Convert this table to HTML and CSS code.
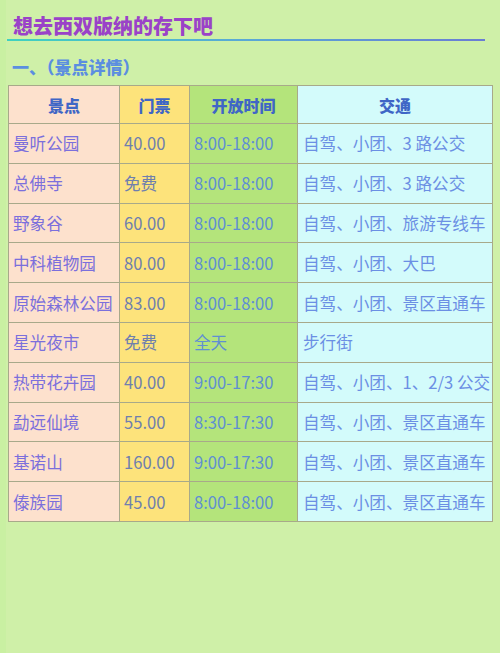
FILE: index.html
```html
<!DOCTYPE html>
<html lang="zh-CN">
<head>
<meta charset="utf-8">
<title>想去西双版纳的存下吧</title>
<link rel="stylesheet" href="styles.css">
</head>
<body>
<div class="page">
  <h1 class="title">想去西双版纳的存下吧</h1>
  <h2 class="subtitle">一、（景点详情）</h2>
  <table class="spots">
    <thead>
      <tr>
        <th class="c1">景点</th>
        <th class="c2">门票</th>
        <th class="c3">开放时间</th>
        <th class="c4">交通</th>
      </tr>
    </thead>
    <tbody>
      <tr><td class="c1">曼听公园</td><td class="c2">40.00</td><td class="c3">8:00-18:00</td><td class="c4">自驾、小团、3 路公交</td></tr>
      <tr><td class="c1">总佛寺</td><td class="c2">免费</td><td class="c3">8:00-18:00</td><td class="c4">自驾、小团、3 路公交</td></tr>
      <tr><td class="c1">野象谷</td><td class="c2">60.00</td><td class="c3">8:00-18:00</td><td class="c4">自驾、小团、旅游专线车</td></tr>
      <tr><td class="c1">中科植物园</td><td class="c2">80.00</td><td class="c3">8:00-18:00</td><td class="c4">自驾、小团、大巴</td></tr>
      <tr><td class="c1">原始森林公园</td><td class="c2">83.00</td><td class="c3">8:00-18:00</td><td class="c4">自驾、小团、景区直通车</td></tr>
      <tr><td class="c1">星光夜市</td><td class="c2">免费</td><td class="c3">全天</td><td class="c4">步行街</td></tr>
      <tr><td class="c1">热带花卉园</td><td class="c2">40.00</td><td class="c3">9:00-17:30</td><td class="c4">自驾、小团、1、2/3 公交</td></tr>
      <tr><td class="c1">勐远仙境</td><td class="c2">55.00</td><td class="c3">8:30-17:30</td><td class="c4">自驾、小团、景区直通车</td></tr>
      <tr><td class="c1">基诺山</td><td class="c2">160.00</td><td class="c3">9:00-17:30</td><td class="c4">自驾、小团、景区直通车</td></tr>
      <tr><td class="c1">傣族园</td><td class="c2">45.00</td><td class="c3">8:00-18:00</td><td class="c4">自驾、小团、景区直通车</td></tr>
    </tbody>
  </table>
</div>
</body>
</html>
```
FILE: styles.css
```css
html, body {
  margin: 0;
  padding: 0;
}
body {
  background: #cff0a8;
  font-family: "Noto Sans CJK SC", "Noto Sans", sans-serif;
}
.page {
  min-height: 653px;
  box-sizing: border-box;
  padding-top: 13px;
  border-left: 6px solid #c9f0a2;
}
.title {
  margin: 0 0 0 1px;
  width: 478px;
  padding: 0 0 2px 6px;
  box-sizing: border-box;
  font-size: 20px;
  line-height: 26px;
  font-weight: 900;
  color: #9a42c8;
  background: linear-gradient(90deg, #3fd2bf, #5aa8d6 50%, #6a7cd4) left bottom / 100% 2px no-repeat;
}
.subtitle {
  margin: 14px 0 0 6px;
  font-size: 17px;
  line-height: 24px;
  font-weight: 900;
  color: #5b8ee0;
}
.spots {
  margin: 6px 0 0 2px;
  width: 485px;
  border-collapse: collapse;
  table-layout: fixed;
  font-size: 16.6px;
}
.spots th, .spots td {
  box-sizing: border-box;
  border: 1px solid #a8a98a;
  padding: 0 0 0 4px;
  white-space: nowrap;
  overflow: hidden;
  text-align: left;
  font-weight: 400;
}
.spots th {
  height: 38px;
  padding: 0;
  text-align: center;
  font-size: 16px;
  font-weight: 900;
  color: #3f66c6;
}
.spots td {
  height: 39.8px;
  line-height: 24px;
}
.spots .c1 { width: 111px; background: #fde1cd; }
.spots .c2 { width: 70px; background: #fde37b; }
.spots .c3 { width: 108px; background: #b4e47b; }
.spots .c4 { background: #d3fbfb; }
.spots td.c1 { color: #7b6fdc; }
.spots td.c2 { color: #6f7fae; }
.spots td.c3 { color: #5f8fd2; }
.spots td.c4 { color: #6b8fe4; padding-left: 5px; }
```
